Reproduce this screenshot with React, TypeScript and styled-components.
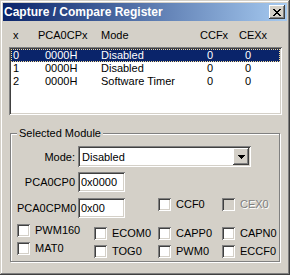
import React from "react";
import styled, { createGlobalStyle, css } from "styled-components";

const GlobalStyle = createGlobalStyle`
  html, body {
    margin: 0;
    padding: 0;
    background: #d4d0c8;
  }
  body {
    font-family: "Liberation Sans", Arial, sans-serif;
    font-size: 11px;
  }
`;

const sunken = css`
  box-shadow: inset 1px 1px #808080, inset -1px -1px #ffffff,
    inset 2px 2px #404040, inset -2px -2px #d4d0c8;
`;

const raised = css`
  box-shadow: inset -1px -1px #404040, inset 1px 1px #ffffff,
    inset -2px -2px #808080, inset 2px 2px #d4d0c8;
`;

const Window = styled.div`
  width: 290px;
  height: 275px;
  box-sizing: border-box;
  padding: 3px;
  background: #d4d0c8;
  box-shadow: inset -1px -1px #404040, inset 1px 1px #d4d0c8,
    inset -2px -2px #808080, inset 2px 2px #ffffff;
  display: flex;
  flex-direction: column;
  overflow: hidden;
  color: #000;
  font: 11px "Liberation Sans", Arial, sans-serif;
`;

const TitleBar = styled.div`
  height: 18px;
  display: flex;
  align-items: center;
  padding: 0 2px 0 1px;
  background: linear-gradient(to right, #0a246a, #a6caf0);
  color: #fff;
  font-weight: bold;
  font-size: 12px;
`;

const TitleText = styled.span`
  flex: 1;
  white-space: nowrap;
`;

const CloseButton = styled.button`
  width: 16px;
  height: 14px;
  padding: 0;
  border: 0;
  background: #d4d0c8;
  ${raised};
  display: flex;
  align-items: center;
  justify-content: center;
`;

const Body = styled.div`
  padding: 0 5px 0 6px;
  display: flex;
  flex-direction: column;
`;

const columns = css`
  display: grid;
  grid-template-columns: 25px 63px 99px 39px 1fr;
  height: 13px;
  line-height: 13px;
  white-space: nowrap;
`;

const HeaderRow = styled.div`
  ${columns};
  margin: 8px 0 5px;
  padding-left: 4px;
`;

const ListBox = styled.div`
  height: 68px;
  box-sizing: border-box;
  padding: 2px;
  background: #fff;
  ${sunken};
`;

const Row = styled.div<{ $selected?: boolean }>`
  ${columns};
  padding-left: 2px;
  ${(p) =>
    p.$selected &&
    css`
      background: #0a246a;
      color: #fff;
      outline: 1px dotted #f5db95;
      outline-offset: -1px;
    `}
`;

const Cell = styled.span<{ $indent?: number }>`
  padding-left: ${(p) => p.$indent ?? 0}px;
`;

const GroupBox = styled.fieldset`
  margin: 12px 2px 0 1px;
  padding: 6px 6px 3px 6px;
  min-width: 0;
  border: 1px solid #808080;
  box-shadow: inset 1px 1px #ffffff, 1px 1px #ffffff;
  display: flex;
  flex-direction: column;
`;

const Legend = styled.legend`
  padding: 0 2px;
  line-height: 13px;
  background: #d4d0c8;
`;

const FieldRow = styled.div<{ $space?: number; $span?: boolean }>`
  display: flex;
  align-items: center;
  gap: 3px;
  margin-top: ${(p) => p.$space ?? 0}px;
  ${(p) => p.$span && "grid-column: span 2;"}
`;

const FieldLabel = styled.span`
  width: 58px;
  text-align: right;
  white-space: nowrap;
`;

const Combo = styled.div`
  width: 173px;
  height: 21px;
  box-sizing: border-box;
  padding: 2px;
  background: #fff;
  ${sunken};
  display: flex;
  align-items: center;
`;

const ComboText = styled.span`
  flex: 1;
  padding-left: 2px;
`;

const ComboButton = styled.span`
  width: 16px;
  height: 17px;
  background: #d4d0c8;
  ${raised};
  display: flex;
  align-items: center;
  justify-content: center;
`;

const TextBox = styled.input`
  width: 47px;
  height: 20px;
  box-sizing: border-box;
  padding: 0 1px 0 3px;
  border: 0;
  outline: none;
  background: #fff;
  ${sunken};
  font: inherit;
  color: #000;
`;

const checkColumns = css`
  display: grid;
  grid-template-columns: 77px 64px 64px 1fr;
`;

const RegisterRow = styled.div`
  ${checkColumns};
  align-items: end;
  margin-top: 6px;
`;

const CheckGrid = styled.div`
  ${checkColumns};
  row-gap: 5px;
  margin-top: 9px;
`;

const CheckItem = styled.label<{ $lift?: boolean; $disabled?: boolean }>`
  display: flex;
  align-items: center;
  gap: 5px;
  height: 13px;
  line-height: 13px;
  white-space: nowrap;
  align-self: start;
  margin-top: ${(p) => (p.$lift ? -3 : 0)}px;
  color: ${(p) => (p.$disabled ? "#808080" : "#000")};
  text-shadow: ${(p) => (p.$disabled ? "1px 1px 0 #fff" : "none")};
`;

const Box = styled.span<{ $disabled?: boolean }>`
  width: 13px;
  height: 13px;
  flex: none;
  background: ${(p) => (p.$disabled ? "#d4d0c8" : "#fff")};
  ${sunken};
`;

const CloseGlyph = () => (
  <svg width="8" height="7" viewBox="0 0 8 7" shapeRendering="crispEdges">
    {[
      [0, 0, 2], [6, 0, 2], [1, 1, 2], [5, 1, 2], [2, 2, 4], [3, 3, 2],
      [2, 4, 4], [1, 5, 2], [5, 5, 2], [0, 6, 2], [6, 6, 2],
    ].map(([x, y, w], i) => (
      <rect key={i} x={x} y={y} width={w} height={1} fill="#000" />
    ))}
  </svg>
);

const ArrowGlyph = () => (
  <svg width="7" height="4" viewBox="0 0 7 4" shapeRendering="crispEdges">
    {[
      [0, 0, 7], [1, 1, 5], [2, 2, 3], [3, 3, 1],
    ].map(([x, y, w], i) => (
      <rect key={i} x={x} y={y} width={w} height={1} fill="#000" />
    ))}
  </svg>
);

const modules = [
  { x: "0", cp: "0000H", mode: "Disabled", ccf: "0", cex: "0" },
  { x: "1", cp: "0000H", mode: "Disabled", ccf: "0", cex: "0" },
  { x: "2", cp: "0000H", mode: "Software Timer", ccf: "0", cex: "0" },
];

const Check = ({ label, lift, disabled }: { label: string; lift?: boolean; disabled?: boolean }) => (
  <CheckItem $lift={lift} $disabled={disabled}>
    <Box $disabled={disabled} />
    {label}
  </CheckItem>
);

const App = () => {
  return (
    <>
      <GlobalStyle />
      <Window>
        <TitleBar>
          <TitleText>Capture / Compare Register</TitleText>
          <CloseButton>
            <CloseGlyph />
          </CloseButton>
        </TitleBar>
        <Body>
          <HeaderRow>
            <Cell>x</Cell>
            <Cell>PCA0CPx</Cell>
            <Cell>Mode</Cell>
            <Cell>CCFx</Cell>
            <Cell>CEXx</Cell>
          </HeaderRow>
          <ListBox>
            {modules.map((m, i) => (
              <Row key={m.x} $selected={i === 0}>
                <Cell>{m.x}</Cell>
                <Cell $indent={7}>{m.cp}</Cell>
                <Cell>{m.mode}</Cell>
                <Cell $indent={7}>{m.ccf}</Cell>
                <Cell $indent={6}>{m.cex}</Cell>
              </Row>
            ))}
          </ListBox>
          <GroupBox>
            <Legend>Selected Module</Legend>
            <FieldRow>
              <FieldLabel>Mode:</FieldLabel>
              <Combo>
                <ComboText>Disabled</ComboText>
                <ComboButton>
                  <ArrowGlyph />
                </ComboButton>
              </Combo>
            </FieldRow>
            <FieldRow $space={5}>
              <FieldLabel>PCA0CP0</FieldLabel>
              <TextBox readOnly defaultValue="0x0000" />
            </FieldRow>
            <RegisterRow>
              <FieldRow $span>
                <FieldLabel>PCA0CPM0</FieldLabel>
                <TextBox readOnly defaultValue="0x00" />
              </FieldRow>
              <Check label="CCF0" />
              <Check label="CEX0" disabled />
            </RegisterRow>
            <CheckGrid>
              <Check label="PWM160" lift />
              <Check label="ECOM0" />
              <Check label="CAPP0" />
              <Check label="CAPN0" />
              <Check label="MAT0" lift />
              <Check label="TOG0" />
              <Check label="PWM0" />
              <Check label="ECCF0" />
            </CheckGrid>
          </GroupBox>
        </Body>
      </Window>
    </>
  );
};

export default App;
